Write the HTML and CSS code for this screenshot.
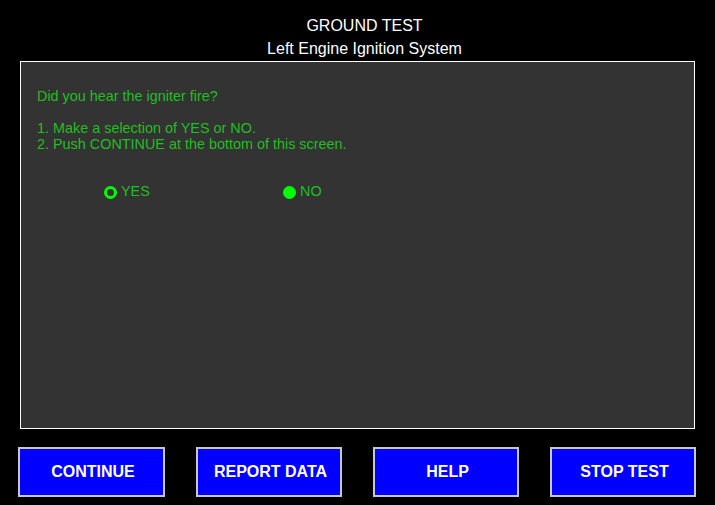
FILE: index.html
```html
<!DOCTYPE html>
<html>
<head>
<meta charset="utf-8">
<link rel="stylesheet" href="styles.css">
</head>
<body>
<div class="screen">
  <header class="header">
    <div class="title">GROUND TEST</div>
    <div class="subtitle">Left Engine Ignition System</div>
  </header>
  <main class="panel">
    <p class="question">Did you hear the igniter fire?</p>
    <p class="steps">1. Make a selection of YES or NO.<br>2. Push CONTINUE at the bottom of this screen.</p>
    <div class="options">
      <div class="option option-yes"><span class="radio radio-ring"></span><span class="label">YES</span></div>
      <div class="option option-no"><span class="radio radio-dot"></span><span class="label">NO</span></div>
    </div>
  </main>
  <footer class="buttons">
    <button class="btn btn-first">CONTINUE</button>
    <button class="btn">REPORT DATA</button>
    <button class="btn">HELP</button>
    <button class="btn">STOP TEST</button>
  </footer>
</div>
</body>
</html>
```
FILE: styles.css
```css
html, body {
  margin: 0;
  padding: 0;
  background: #000;
}
.screen {
  width: 715px;
  height: 505px;
  font-family: "Liberation Sans", Arial, sans-serif;
  display: flex;
  flex-direction: column;
}
.header {
  color: #fff;
  font-size: 16px;
  text-align: center;
  padding: 14px 0 0 14px;
  line-height: 23px;
  height: 47px;
}
.panel {
  margin: 0 0 0 20px;
  width: 675px;
  height: 368px;
  box-sizing: border-box;
  border: 1px solid #fff;
  background: #333333;
  color: #1fbf1f;
  font-size: 14.4px;
  line-height: 16px;
  padding: 26px 0 0 16px;
}
.panel p {
  margin: 0;
}
.steps {
  margin-top: 16px !important;
}
.options {
  display: flex;
  margin-top: 31px;
  padding-left: 67px;
}
.option {
  display: flex;
  align-items: center;
}
.option-yes {
  width: 179px;
}
.radio {
  width: 13px;
  height: 13px;
  border-radius: 50%;
  box-sizing: border-box;
  margin-right: 4px;
  margin-top: 2px;
}
.radio-ring {
  border: 3px solid #00ff00;
}
.radio-dot {
  background: #00ff00;
}
.buttons {
  display: flex;
  gap: 31px;
  padding: 18px 0 0 18px;
}
.btn {
  width: 146px;
  height: 50px;
  box-sizing: border-box;
  background: #0000ff;
  border: 2px solid #c8c8c8;
  color: #fff;
  font-family: "Liberation Sans", Arial, sans-serif;
  font-weight: bold;
  font-size: 16px;
  padding: 0 0 0 3px;
  margin: 0;
}
.btn-first {
  width: 147px;
}
```
